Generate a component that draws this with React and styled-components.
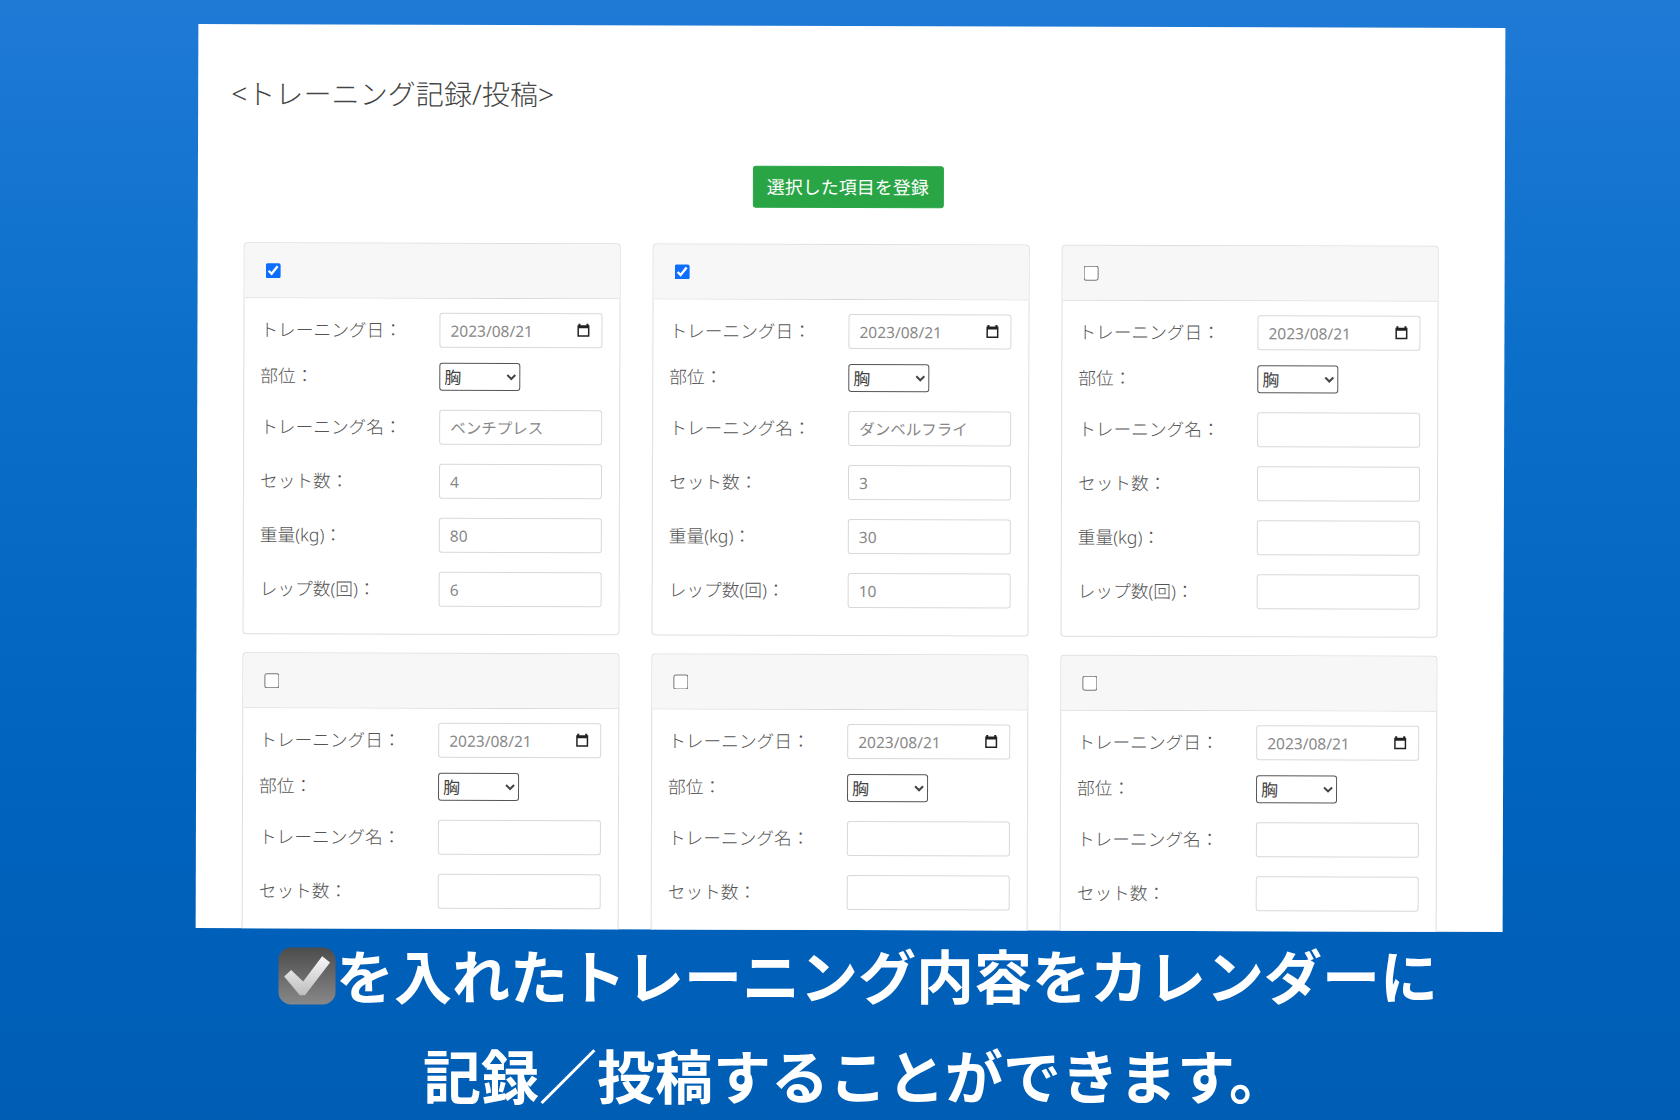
import React from "react";
import styled, { createGlobalStyle } from "styled-components";

const GlobalStyle = createGlobalStyle`
  html, body {
    margin: 0;
    padding: 0;
    height: 100%;
  }
  body {
    font-family: "Noto Sans", "Noto Sans CJK JP", sans-serif;
  }
`;

const Page = styled.div`
  width: 1680px;
  height: 1120px;
  overflow: hidden;
  display: flex;
  flex-direction: column;
  background: linear-gradient(180deg, #1f7ad6 0%, #0c70ca 30%, #0063be 70%, #005db4 100%);
`;

const Sheet = styled.div`
  width: 1307px;
  height: 904px;
  margin: 26px 0 0 197px;
  flex: 0 0 auto;
  background: #fff;
  overflow: hidden;
  transform: rotate(0.175deg);
  padding: 49px 0 0 33px;
  box-sizing: border-box;
`;

const Title = styled.h1`
  margin: 0;
  font-size: 28px;
  line-height: 40px;
  font-weight: 300;
  color: #444;
  letter-spacing: 0.1px;
`;

const ButtonRow = styled.div`
  display: flex;
  justify-content: center;
  padding: 51px 0 0 0;
  width: 1234px;
`;

const SubmitButton = styled.button`
  width: 191px;
  height: 42px;
  border: 1px solid #2aa546;
  border-radius: 3px;
  background: #2aa546;
  color: #fff;
  font-family: inherit;
  font-size: 18px;
  font-weight: 400;
  padding: 0 0 3px;
`;

const CardGrid = styled.div`
  display: grid;
  grid-template-columns: repeat(3, 377px);
  column-gap: 32px;
  row-gap: 18px;
  margin: 36px 0 0 13px;
`;

const Card = styled.div`
  height: 392px;
  box-sizing: border-box;
  border: 1px solid #dedede;
  border-radius: 4px;
  background: #fff;
`;

const CardHeader = styled.div`
  height: 55px;
  box-sizing: border-box;
  display: flex;
  align-items: center;
  padding-left: 21px;
  background: #f7f7f7;
  border-bottom: 1px solid #d8d8d8;
  border-radius: 4px 4px 0 0;
`;

const Check = styled.input`
  width: 15px;
  height: 15px;
  margin: 0;
  accent-color: #0d6efd;
`;

const CardBody = styled.div`
  padding: 14px 0 0 16px;
`;

const Row = styled.div`
  display: grid;
  grid-template-columns: 179px 163px;
  align-items: center;
  margin-bottom: ${(props) => props.$gap}px;
`;

const Label = styled.label`
  font-size: 17.7px;
  font-weight: 300;
  line-height: 24px;
  padding-bottom: 2px;
  color: #555;
  white-space: nowrap;
`;

const FieldWrap = styled.div`
  position: relative;
  width: 163px;
`;

const TextField = styled.input`
  display: block;
  width: 163px;
  height: 35px;
  box-sizing: border-box;
  padding: 0 10px;
  border: 1px solid #d8d8d8;
  border-radius: 3px;
  background: #fff;
  color: #888;
  font-family: inherit;
  font-size: 15.5px;
`;

const CalendarIcon = styled.svg`
  position: absolute;
  top: 9px;
  right: 11px;
  width: 16px;
  height: 16px;
`;

const PartSelect = styled.select`
  width: 81px;
  height: 28px;
  box-sizing: border-box;
  padding: 0;
  border: 1px solid #555;
  border-radius: 3px;
  background: #fff;
  color: #444;
  font-family: inherit;
  font-size: 17px;
`;

const Caption = styled.div`
  flex: 1 1 auto;
  display: flex;
  flex-direction: column;
  align-items: center;
  row-gap: 20px;
  padding: 4px 0 0 36px;
  color: #fff;
  font-family: "Noto Sans CJK JP", sans-serif;
  font-weight: 700;
  font-size: 58px;
  line-height: 80px;
`;

const CaptionLine = styled.div`
  display: flex;
  align-items: center;
  white-space: nowrap;
  margin-right: ${(props) => props.$nudge || 0}px;
`;

const CheckBadge = styled.svg`
  width: 58px;
  height: 58px;
  margin-top: 4px;
  flex: 0 0 auto;
`;

const cards = [
  { checked: true, name: "ベンチプレス", sets: "4", weight: "80", reps: "6", full: true },
  { checked: true, name: "ダンベルフライ", sets: "3", weight: "30", reps: "10", full: true },
  { checked: false, name: "", sets: "", weight: "", reps: "", full: true },
  { checked: false, name: "", sets: "", full: false },
  { checked: false, name: "", sets: "", full: false },
  { checked: false, name: "", sets: "", full: false },
];

const Calendar = () => (
  <CalendarIcon viewBox="0 0 16 16">
    <path
      d="M3 1.5h2V3h6V1.5h2V3h1v11.5H2V3h1V1.5zM3.5 6v7h9V6h-9z"
      fill="#222"
    />
  </CalendarIcon>
);

// the lower cards run off the bottom of the sheet, only their first rows show
const TrainingCard = ({ card }) => (
  <Card>
    <CardHeader>
      <Check type="checkbox" defaultChecked={card.checked} />
    </CardHeader>
    <CardBody>
      <Row $gap={15}>
        <Label>トレーニング日：</Label>
        <FieldWrap>
          <TextField readOnly value="2023/08/21" />
          <Calendar />
        </FieldWrap>
      </Row>
      <Row $gap={19}>
        <Label>部位：</Label>
        <PartSelect defaultValue="胸">
          <option>胸</option>
          <option>背中</option>
          <option>脚</option>
        </PartSelect>
      </Row>
      <Row $gap={19}>
        <Label>トレーニング名：</Label>
        <TextField readOnly value={card.name} />
      </Row>
      <Row $gap={19}>
        <Label>セット数：</Label>
        <TextField readOnly value={card.sets} />
      </Row>
      {card.full && (
        <>
          <Row $gap={19}>
            <Label>重量(kg)：</Label>
            <TextField readOnly value={card.weight} />
          </Row>
          <Row $gap={0}>
            <Label>レップ数(回)：</Label>
            <TextField readOnly value={card.reps} />
          </Row>
        </>
      )}
    </CardBody>
  </Card>
);

const App = () => (
  <>
    <GlobalStyle />
    <Page>
      <Sheet>
        <Title>&lt;トレーニング記録/投稿&gt;</Title>
        <ButtonRow>
          <SubmitButton type="button">選択した項目を登録</SubmitButton>
        </ButtonRow>
        <CardGrid>
          {cards.map((card, i) => (
            <TrainingCard key={i} card={card} />
          ))}
        </CardGrid>
      </Sheet>
      <Caption>
        <CaptionLine>
          <CheckBadge viewBox="0 0 60 60">
            <defs>
              <linearGradient id="badgeFill" x1="0" y1="0" x2="0" y2="1">
                <stop offset="0" stopColor="#4c4c4c" />
                <stop offset="1" stopColor="#888888" />
              </linearGradient>
              <linearGradient id="tickFill" x1="0" y1="0" x2="0" y2="1">
                <stop offset="0" stopColor="#f8f8f8" />
                <stop offset="1" stopColor="#bdbdbd" />
              </linearGradient>
            </defs>
            <rect x="0.5" y="0.5" width="59" height="59" rx="13" fill="url(#badgeFill)" />
            <path d="M6.4 30.4L13.6 23.9L26 35.7L45.7 9.6L53.9 16L27.9 50H22.5z" fill="url(#tickFill)" />
          </CheckBadge>
          を入れたトレーニング内容をカレンダーに
        </CaptionLine>
        <CaptionLine $nudge={6}>記録／投稿することができます。</CaptionLine>
      </Caption>
    </Page>
  </>
);

export default App;
